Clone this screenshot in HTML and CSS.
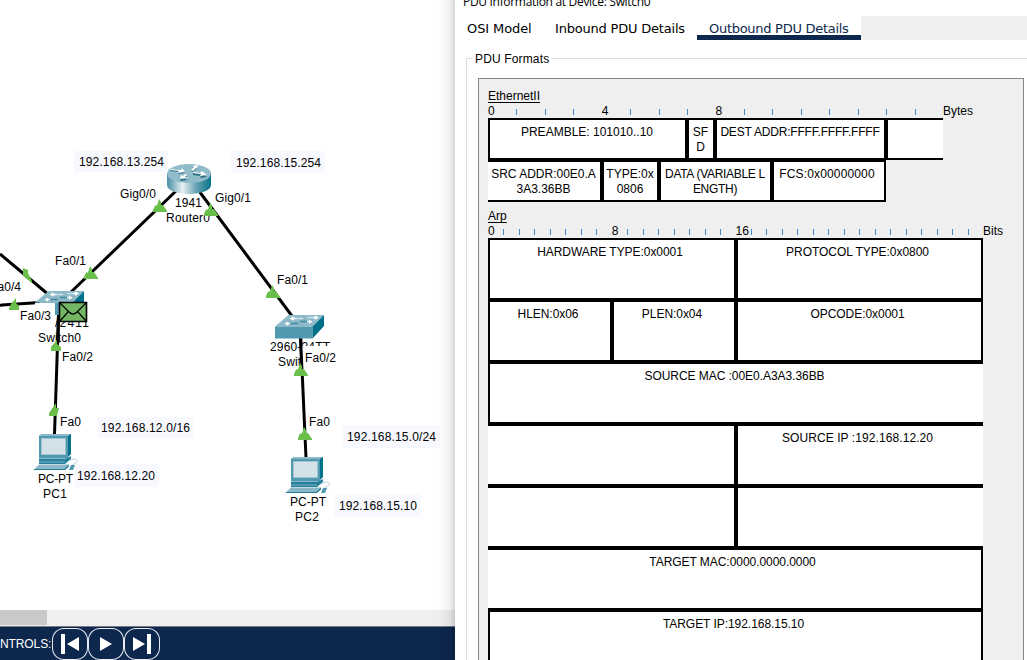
FILE: index.html
```html
<!DOCTYPE html>
<html lang="en">
<head>
<meta charset="utf-8">
<title>PDU Information</title>
<link rel="stylesheet" href="styles.css">
</head>
<body>
<div class="app">
  <main class="workspace">
    <svg class="topology" width="455" height="610" viewBox="0 0 455 610">
      <defs>
        <linearGradient id="metal"><stop offset="0" stop-color="#4d91a9"/><stop offset=".12" stop-color="#79abbb"/><stop offset=".35" stop-color="#e9f2f4"/><stop offset=".65" stop-color="#6ba5b6"/><stop offset="1" stop-color="#087388"/></linearGradient>
        <g id="switch">
          <path fill="#8db9c9" d="M0 11.500 13.500 0H49L37.500 11.500Z"/>
          <path fill="#5199b0" d="M0 11.500H37.500V23.500H0Z"/>
          <path fill="#00708a" d="M37.500 11.500 49 0V11L37.500 23.500Z"/>
          <path stroke="#c9dfe6" stroke-width="1.300" d="M17 3.500H28M32 2.500H42"/>
          <path stroke="#3f87a0" stroke-width="1.300" d="M12 8.500H23M25 6.500H34"/>
          <path fill="#fff" d="M14.500 3.500l4-2.200v1.500h2v1.400h-2v1.500zM44 2.500l-4-2v1.300h-2v1.400h2V5zM9.500 8.500l3.700-2v1.300h2v1.400h-2v1.500zM37.500 6.500l-3.500-2v1.300h-2v1.400h2V9z"/>
        </g>
        <g id="pc">
          <path fill="#00728a" d="M5 2 8 0H37V20L33 24Z"/>
          <path fill="#8bb8c8" d="M5 2 8 0H37L34 2Z"/>
          <path fill="#5199b0" d="M5 2H34V24H5Z"/>
          <path fill="#d3e2e9" stroke="#a3c5d0" d="M7.500 4.500H31.500V20.500H7.500Z"/>
          <path fill="#8bb8c8" d="M5 24H35L32 27H6Z"/>
          <path fill="#267f98" d="M5 25H31L37 22V25L31 30H5Z"/>
          <path fill="#5199b0" d="M5 27H31V29H5Z"/>
          <path fill="#8bb8c8" d="M5 30.500H35L30 35.500H0Z"/>
          <path fill="#267f98" d="M35 30.500V32.500L31 36H0V35H30Z"/>
          <path fill="none" stroke="#b7d2dc" d="M35 27C39 24 45 25 43 28S38 29 38 32"/>
          <path fill="#5199b0" d="M37 31H41L39 36H35Z"/>
        </g>
        <path id="up" fill="#6abf4b" d="M0 13V11L2 6.500H4L6 0V0L8 3V6H10L14 12V13Z"/>
      </defs>

      <g class="cable">
        <path d="M0 254 49 295M0 305.500 2 305 40 302.500M70 293 177 190M199 191 292 316M300.500 335 306 458M58.500 315 54.500 434"/>
      </g>

      <g class="caption">
        <text x="175" y="207" textLength="27">1941</text>
        <text x="166" y="222" textLength="44">Router0</text>
        <text x="55" y="327" textLength="34">/2411</text>
        <text x="38" y="342" textLength="43">Switch0</text>
        <text x="270" y="351" textLength="60">2960-24TT</text>
        <text x="278" y="366" textLength="43">Switch1</text>
      </g>
      <g class="patch">
        <path d="M302 346H340V374H302ZM76 468H158V487H76Z"/>
      </g>
      <path stroke="#000" stroke-width="3" d="M300.500 336 302 372"/>

      <g transform="translate(167 164)">
        <path fill="url(#metal)" d="M0 9V21C0 26.500 10 30 22 30S44 26.500 44 21V9Z"/>
        <ellipse cx="22" cy="9.500" rx="22" ry="9.500" fill="#90bbc9"/>
        <g fill="#2b7186" transform="translate(0 1)"><path d="M4 4 14 5 15 4 18 8 11 9 12 7 3 6ZM24 6 27 3 25 2 31 1 30 5 29 4 26 7ZM26 8 33 9 35 8 40 12 33 13 34 11 26 10ZM20 11 18 14 21 15 13 16 14 12 16 13 18 11Z"/></g>
        <path fill="#fff" d="M4 5 14 6 15 4 18 8 10 9 12 7 3 6ZM24 6 27 3 25 2 31 1 30 5 29 4 26 7ZM26 8 33 9 35 7 40 11 33 12 34 10 26 9ZM20 11 18 13 21 14 13 15 14 11 16 12 18 10Z"/>
      </g>
      <use href="#switch" x="35" y="291"/>
      <path fill="#fff" d="M35 303H55V328H35Z"/>
      <path fill="#5199b0" d="M55 303H60V315H55Z"/>
      <path stroke="#000" stroke-width="3" d="M58.500 315 58 343"/>
      <use href="#switch" x="275" y="315"/>
      <use href="#pc" x="34" y="434"/>
      <use href="#pc" x="286" y="457"/>
      <g class="envelope"><path d="M59.500 302.500H86.500V321.500H59.500Z"/><path class="fold" d="M60 303 69 312Q73 316 77 312L86 303M60 321 68 312M86 321 78 312"/></g>

      <use href="#up" x="153" y="199"/>
      <use href="#up" x="204" y="203"/>
      <use href="#up" x="84" y="266"/>
      <path fill="#6abf4b" d="M23 268 28 270V273L32 281V283L23 276Z"/>
      <path fill="#6abf4b" d="M9 310V308L11 304L16 298V303L19 306V310Z"/>
      <use href="#up" x="266" y="285"/>
      <use href="#up" x="294" y="363"/>
      <use href="#up" x="298" y="427"/>
      <path fill="#6abf4b" d="M51 351V347L57 340V344L61 347V351ZM49 416V413L56 403V408H59L57 416Z"/>

      <g class="note">
        <path d="M74 151H168V172H74ZM231 151H325V173H231ZM97 417H194V438H97ZM343 425H440V448H343ZM334 494H421V517H334ZM75 464H159V487H75Z"/>
      </g>
      <g class="caption">
        <text x="79" y="166" textLength="85">192.168.13.254</text>
        <text x="236" y="167" textLength="85">192.168.15.254</text>
        <text x="120" y="198" textLength="36">Gig0/0</text>
        <text x="215" y="202" textLength="36">Gig0/1</text>
        <text x="55" y="265" textLength="31">Fa0/1</text>
        <text x="-10" y="291" textLength="31">Fa0/4</text>
        <text x="20" y="320" textLength="31">Fa0/3</text>
        <text x="62" y="361" textLength="31">Fa0/2</text>
        <text x="277" y="284" textLength="31">Fa0/1</text>
        <text x="305" y="362" textLength="31">Fa0/2</text>
        <text x="60" y="426" textLength="21">Fa0</text>
        <text x="309" y="426" textLength="21">Fa0</text>
        <text x="38" y="483" textLength="35">PC-PT</text>
        <text x="43" y="498" textLength="24">PC1</text>
        <text x="290" y="506" textLength="36">PC-PT</text>
        <text x="295" y="521" textLength="24">PC2</text>
        <text x="101" y="432" textLength="89">192.168.12.0/16</text>
        <text x="347" y="441" textLength="89">192.168.15.0/24</text>
        <text x="77" y="480" textLength="78">192.168.12.20</text>
        <text x="339" y="510" textLength="78">192.168.15.10</text>
      </g>
    </svg>
    <div class="scrollbar"><div class="thumb"></div></div>
    <footer class="controls">
      <span class="controls-label">NTROLS:</span>
      <button class="control" aria-label="Back"><svg width="36" height="32"><path d="M9 6h4v20H9zM27 9v14L15 16z"/></svg></button>
      <button class="control" aria-label="Play"><svg width="36" height="32"><path d="M12 9v14l12-7z"/></svg></button>
      <button class="control" aria-label="Forward"><svg width="36" height="32"><path d="M9 9v14l12-7zM23 6h4v20h-4z"/></svg></button>
    </footer>
    <div class="edge-shadow"></div>
  </main>

  <section class="dialog">
    <header class="title">PDU Information at Device: Switch0</header>
    <nav class="tabs">
      <span class="tab tab-osi">OSI Model</span>
      <span class="tab tab-in">Inbound PDU Details</span>
      <span class="tab tab-out">Outbound PDU Details</span>
      <span class="tab-fill"></span>
    </nav>
    <fieldset class="formats">
      <legend>PDU Formats</legend>
      <div class="sheet">
        <h2>EthernetII</h2>
        <div class="ruler bytes"><b>0</b><i></i><i></i><i></i><b>4</b><i></i><i></i><i></i><b>8</b><i></i><i></i><i></i><i></i><i></i><i></i><i></i><em>Bytes</em></div>
        <div class="row eth-first">
          <div class="cell l r">PREAMBLE: 101010..10</div>
          <div class="cell l r">SF<br>D</div>
          <div class="cell l r tight">DEST ADDR:FFFF.FFFF.FFFF</div>
          <div class="cell l"></div>
        </div>
        <div class="row eth-second">
          <div class="cell r">SRC ADDR:00E0.A<br>3A3.36BB</div>
          <div class="cell l r">TYPE:0x<br>0806</div>
          <div class="cell l r snug">DATA (VARIABLE L<br>ENGTH)</div>
          <div class="cell l r fcs">FCS:0x00000000</div>
        </div>
        <h2 class="arp-title">Arp</h2>
        <div class="ruler bits"><b>0</b><i></i><i></i><i></i><i></i><i></i><i></i><i></i><b>8</b><i></i><i></i><i></i><i></i><i></i><i></i><i></i><b>16</b><i></i><i></i><i></i><i></i><i></i><i></i><i></i><i></i><i></i><i></i><i></i><i></i><i></i><i></i><i></i><em>Bits</em></div>
        <div class="row arp half">
          <div class="cell l r">HARDWARE TYPE:0x0001</div>
          <div class="cell l r">PROTOCOL TYPE:0x0800</div>
        </div>
        <div class="row arp thirds">
          <div class="cell l r">HLEN:0x06</div>
          <div class="cell l r">PLEN:0x04</div>
          <div class="cell l r">OPCODE:0x0001</div>
        </div>
        <div class="row arp"><div class="cell l">SOURCE MAC :00E0.A3A3.36BB</div></div>
        <div class="row arp half">
          <div class="cell r"></div>
          <div class="cell l source-ip">SOURCE IP :192.168.12.20</div>
        </div>
        <div class="row arp half">
          <div class="cell r"></div>
          <div class="cell l"></div>
        </div>
        <div class="row arp"><div class="cell r">TARGET MAC:0000.0000.0000</div></div>
        <div class="row arp"><div class="cell l r">TARGET IP:192.168.15.10</div></div>
      </div>
    </fieldset>
  </section>
</div>
</body>
</html>
```
FILE: styles.css
```css
* { box-sizing: border-box; }
body { margin: 0; overflow: hidden; font: 12px/15px "Liberation Sans", Arial, sans-serif; color: #000; background: #fff; }
.app { display: grid; grid-template-columns: 455px 572px; height: 660px; overflow: hidden; }

.workspace { position: relative; display: grid; grid-template-rows: 610px 16px 34px; overflow: hidden; }
.topology { display: block; }
.cable path { fill: none; stroke: #000; stroke-width: 3; }
.patch path { fill: #fff; }
.note path { fill: #f8f8ff; }
.envelope path { fill: #73b765; stroke: #000; stroke-width: 1.6; }
.envelope .fold { fill: none; stroke-width: 1.2; }
.scrollbar { background: #efefef; }
.thumb { width: 47px; height: 15px; background: #c9c9c9; }
.controls { display: flex; background: #0d274d; border-top: 1px solid #77798a; color: #fff; }
.controls-label { width: 52px; padding-top: 10px; white-space: nowrap; letter-spacing: -.1px; }
.control { width: 36px; height: 32px; padding: 0; margin: 1px 0 0; border: 0; background: none; border-radius: 12px; box-shadow: inset 0 0 0 1px #e8ecf2; }
.control svg { display: block; fill: #fff; }
.edge-shadow { position: absolute; top: 0; right: 0; bottom: 0; width: 16px; background: linear-gradient(to right, rgba(0,0,0,0), rgba(0,0,0,.06) 65%, rgba(0,0,0,.16)); }

.dialog { display: flex; flex-direction: column; background: #fff; height: 660px; overflow: hidden; }
.title { height: 16px; padding-left: 8px; font: 12px/16px "Open Sans", sans-serif; margin-top: -6px; letter-spacing: -.31px; }
.tabs { display: grid; grid-template-columns: 90px 152px 164px 1fr; grid-template-rows: 24px; height: 24px; margin-top: 6px; font: 13px/26px "DejaVu Sans", sans-serif; }
.tab { height: 24px; white-space: nowrap; letter-spacing: -.2px; }
.tab-osi { padding-left: 12px; letter-spacing: -.1px; }
.tab-in { padding-left: 10px; }
.tab-out { padding-left: 12px; color: #0d274d; border-bottom: 5px solid #0d274d; letter-spacing: -.28px; }
.tab-fill { background: #efefef; }

.formats { flex: none; height: 640px; min-width: 0; margin: 11px -10px 0 11px; padding: 12px 13px 0 11px; border: 1px solid #dcdcdc; }
legend { padding: 1px 2px 0; margin-left: -5px; line-height: 15px; height: 15px; letter-spacing: .15px; }
.sheet { width: 546px; height: 600px; padding: 10px 0 0 9px; background: #efefef; border: 1px solid #80868e; }
h2 { margin: 0; height: 15px; font-size: 12px; line-height: 15px; font-weight: 400; text-decoration: underline; text-underline-offset: 2px; }
.arp-title { margin-top: 7px; }
.ruler { display: grid; height: 14px; white-space: nowrap; }
.bytes { grid-template-columns: repeat(16, 28.44px) auto; width: 495px; }
.bits { grid-template-columns: repeat(32, 15.47px) auto; width: 530px; }
.ruler b, .ruler em { font-weight: 400; font-style: normal; }
.ruler i { width: 1px; height: 6px; margin-top: 5px; background: #3f8ccc; }
.row { display: grid; }
.arp { width: 495px; height: 62px; }
.half { grid-template-columns: 248px 247px; }
.thirds { grid-template-columns: 124px 124px 247px; }
.eth-first { grid-template-columns: 199px 28px 171px 57px; width: 455px; height: 42px; }
.eth-second { grid-template-columns: 114px 57px 113px 114px; width: 398px; height: 42px; }
.cell { padding-top: 5px; text-align: center; white-space: nowrap; background: #fff; border: 0 solid #000; border-width: 2px 0; }
.eth-first .cell, .eth-second .cell { padding-right: 1px; }
.eth-second .fcs { padding-right: 4px; letter-spacing: .15px; }
.arp .cell { padding-right: 4px; letter-spacing: -.05px; }
.arp .source-ip { padding-right: 6px; letter-spacing: .08px; }
.tight { letter-spacing: -.19px; }
.snug { letter-spacing: -.3px; }
.l { border-left-width: 2px; }
.r { border-right-width: 2px; }
```
